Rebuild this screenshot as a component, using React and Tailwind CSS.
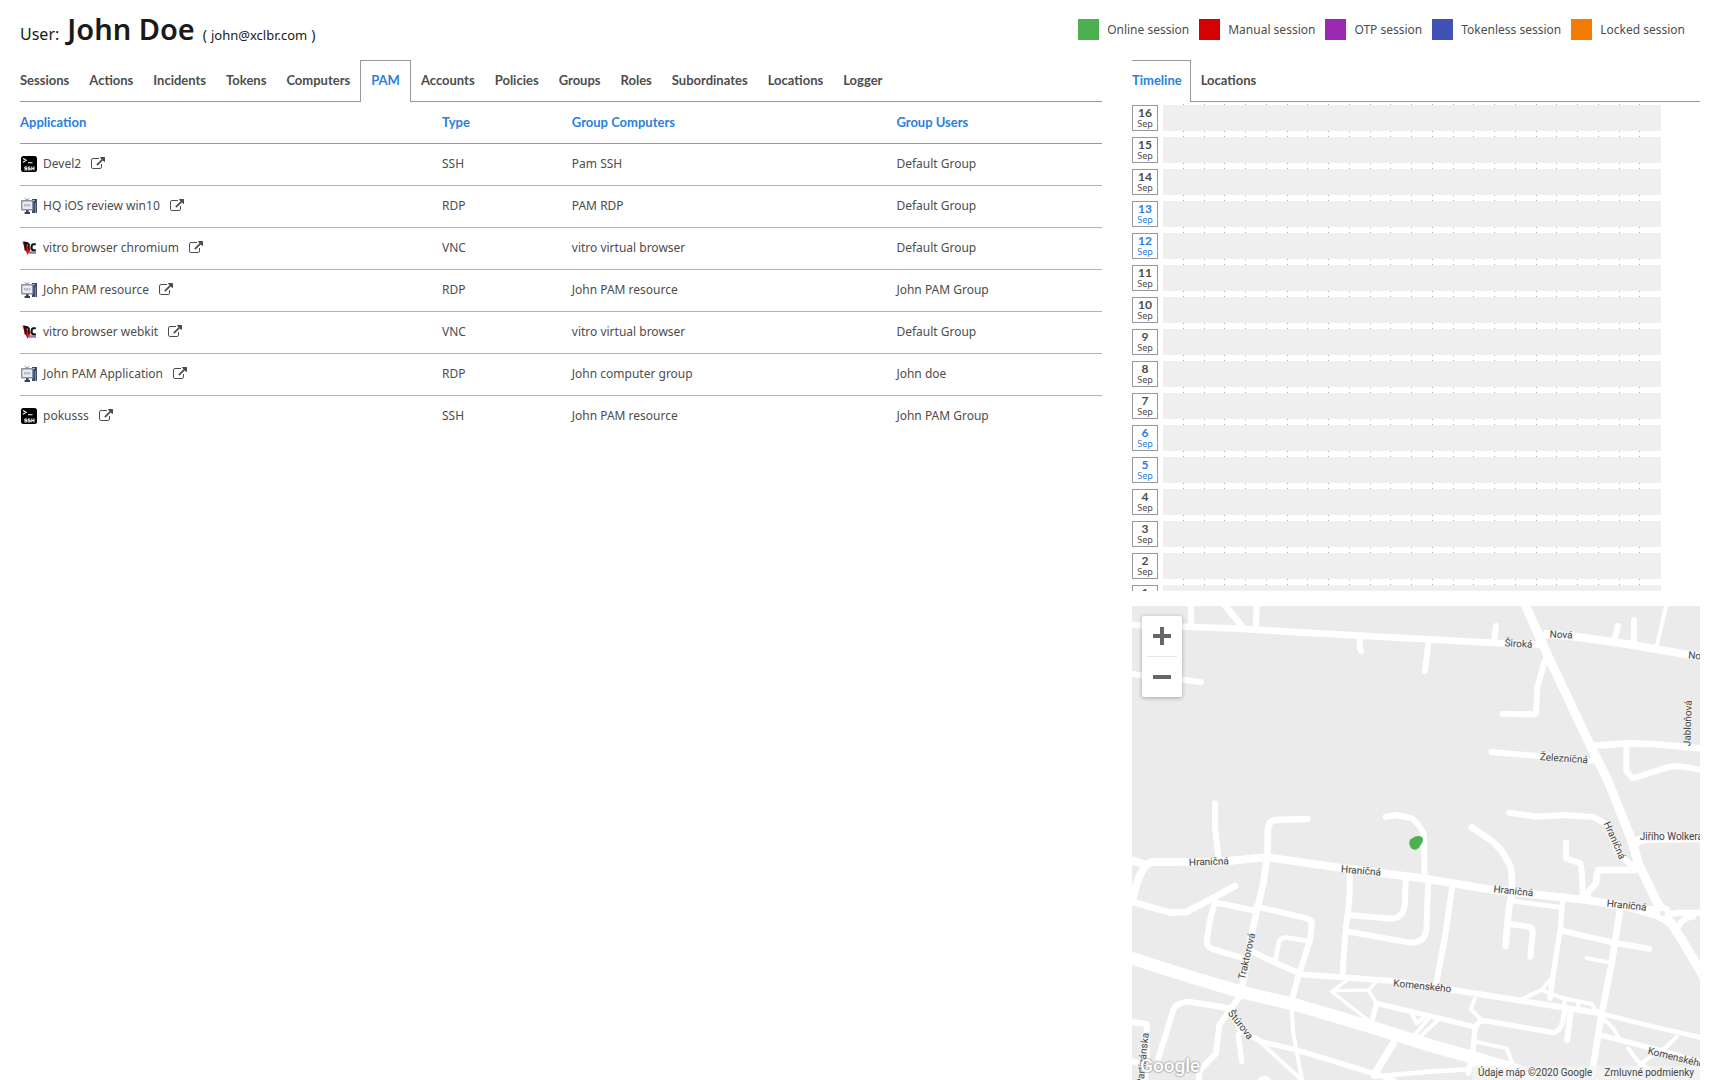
import React from "react";

const legend = [
  ["Online session", "bg-[#4caf50]"],
  ["Manual session", "bg-[#d50000]"],
  ["OTP session", "bg-[#9c27b0]"],
  ["Tokenless session", "bg-[#3f51b5]"],
  ["Locked session", "bg-[#f57c00]"],
];

const tabs = [
  "Sessions", "Actions", "Incidents", "Tokens", "Computers", "PAM", "Accounts",
  "Policies", "Groups", "Roles", "Subordinates", "Locations", "Logger",
];

const rows = [
  ["Devel2", "SSH", "Pam SSH", "Default Group"],
  ["HQ iOS review win10", "RDP", "PAM RDP", "Default Group"],
  ["vitro browser chromium", "VNC", "vitro virtual browser", "Default Group"],
  ["John PAM resource", "RDP", "John PAM resource", "John PAM Group"],
  ["vitro browser webkit", "VNC", "vitro virtual browser", "Default Group"],
  ["John PAM Application", "RDP", "John computer group", "John doe"],
  ["pokusss", "SSH", "John PAM resource", "John PAM Group"],
];

const days = [16, 15, 14, 13, 12, 11, 10, 9, 8, 7, 6, 5, 4, 3, 2, 1];
const weekend = [13, 12, 6, 5];
const hours = Array.from({ length: 24 }, (_, i) => i);

function SshIcon() {
  return (
    <svg className="size-4 shrink-0" viewBox="0 0 16 16" aria-hidden="true">
      <rect width="16" height="16" rx="2.5" fill="#000" />
      <path d="M2 2.5l3.2 1.8L2 6.2M7 6.8h4.5" fill="none" stroke="#fff" strokeWidth="1.1" />
      <path d="M6 11H3.800v1.400H6v1.500H3.300M9.300 11H7.200v1.400h2.100v1.500H6.800M10.800 10.500v3.900M13 10.500v3.900M10.800 12.400h2.200" fill="none" stroke="#fff" strokeWidth="1" />
    </svg>
  );
}

function RdpIcon() {
  return (
    <svg className="size-4 shrink-0" viewBox="0 0 16 16" aria-hidden="true">
      <path d="M11 1h5v14h-5z" fill="#3c4a68" />
      <path d="M14.500 5v10" stroke="#7c89a5" strokeWidth="1" />
      <path d="M12 2.500h2" stroke="#a5afc2" strokeWidth="1" />
      <path d="M3.500 0L6 2.200 8.500 0" fill="none" stroke="#7b869c" strokeWidth="1" />
      <rect x=".7" y="2.700" width="11" height="9" rx=".5" fill="#e9ebef" stroke="#8791a5" strokeWidth="1.400" />
      <path d="M3 7.200h6.500" stroke="#b3bac8" strokeWidth="2.600" strokeDasharray="1.800 .5" />
      <path d="M5 12.300h2.600V14H9v2H3.600v-2H5z" fill="#33415f" />
    </svg>
  );
}

function VncIcon() {
  return (
    <svg className="size-4 shrink-0" viewBox="0 0 16 16" aria-hidden="true">
      <path d="M8.500 11.300H15v2.400H7.800z" fill="#8482b4" />
      <path d="M1.300 1.500h3.200L8.500 9l1-3v4L6.600 14.800 4.200 10z" fill="#f00a0a" />
      <path d="M3 2h3.500l2.300 2V9.500H7V5L5.400 4v6.500H3.600z" fill="#111" />
      <path d="M14.800 4.200h-2.300q-1.900 0-1.900 3t1.900 3h2.300" fill="none" stroke="#111" strokeWidth="2" />
    </svg>
  );
}

const typeIcons = { SSH: SshIcon, RDP: RdpIcon, VNC: VncIcon };

function ExternalIcon() {
  return (
    <svg className="size-3.5" viewBox="0 0 1792 1792" fill="currentColor" aria-hidden="true">
      <path d="M1408 928v320q0 119-84.500 203.500t-203.500 84.500h-832q-119 0-203.500-84.500t-84.500-203.500v-832q0-119 84.500-203.500t203.500-84.500h704q14 0 23 9t9 23v64q0 14-9 23t-23 9h-704q-66 0-113 47t-47 113v832q0 66 47 113t113 47h832q66 0 113-47t47-113v-320q0-14 9-23t23-9h64q14 0 23 9t9 23zm384-864v512q0 26-19 45t-45 19-45-19l-176-176-652 652q-10 10-23 10t-23-10l-114-114q-10-10-10-23t10-23l652-652-176-176q-19-19-19-45t19-45 45-19h512q26 0 45 19t19 45z" />
    </svg>
  );
}

/* Streets as [stroke width, path]; the map's unit is a third of a pixel. */
const streets = [
  [20, "M6 75L190 81L330 86L520 98L900 118L1120 130L1225 134"],
  [18, "M182 10L184 78"],
  [20, "M280 10L335 78"],
  [18, "M381 10L377 85"],
  [18, "M690 118L689 143L693 153"],
  [18, "M896 120L885 213"],
  [18, "M6 222L213 246"],
  [24, "M1250 102L1350 112L1490 132L1720 172"],
  [18, "M1098 78L1093 118"],
  [18, "M1464 78L1453 118"],
  [18, "M1512 60V125"],
  [12, "M1610 10L1581 135"],
  [18, "M1245 180L1222 262L1218 338Q1218 343 1210 343L1118 342"],
  [18, "M1085 456L1385 482"],
  [20, "M1395 437L1490 430L1570 432L1720 446"],
  [18, "M1489 440V512L1508 535L1620 500Q1650 495 1720 512"],
  [18, "M1138 638L1220 650L1300 645L1390 651L1430 672L1465 760L1515 805"],
  [20, "M1025 682L1085 722L1115 752L1137 790Q1146 805 1146 850L1145 880L1136 930L1127 1038"],
  [18, "M255 610V680L265 770"],
  [20, "M532 657L435 660Q418 662 414 685L412 770L400 850L365 1000L335 1170"],
  [18, "M767 651L800 645L845 655Q880 685 882 710L884 835"],
  [24, "M6 782L50 795M6 905Q30 790 70 786L270 785L410 772L640 805L900 838L1090 870L1370 900L1490 920L1580 940"],
  [20, "M6 905L120 938L170 936L260 888L315 858"],
  [18, "M255 905L240 960L230 1025Q231 1043 250 1048L335 1073M362 1053L440 1090L515 1123L540 1125L780 1142L970 1170L1410 1240"],
  [18, "M258 908L380 933M380 920L530 955Q547 960 545 975L540 1020L505 1130L487 1195"],
  [12, "M485 1230L490 1300L517 1445"],
  [14, "M436 1080L447 1025Q453 1012 470 1013L535 1023"],
  [38, "M-10 1070L180 1130L330 1175L500 1215L720 1280L900 1336L1020 1370L1130 1402L1200 1425"],
  [18, "M660 820L658 900L645 1010L638 1125"],
  [18, "M655 945L790 956Q825 950 825 900L827 840"],
  [18, "M655 995L840 1028Q885 1028 889 990L895 840"],
  [10, "M650 1142L605 1175L720 1265M610 1172L715 1170L740 1145M715 1170L740 1210"],
  [16, "M725 1265L740 1210L900 1248L1030 1280"],
  [12, "M845 1240L860 1270L885 1250M850 1310L900 1250M870 1310L930 1255"],
  [22, "M790 1330L735 1420"],
  [18, "M-5 1265L50 1272V1370L45 1440M-5 1380L50 1395"],
  [18, "M85 1375L130 1230Q136 1213 160 1208L175 1205L300 1225"],
  [18, "M325 1195L268 1275L258 1360L210 1410L205 1450"],
  [16, "M300 1230L330 1290L395 1325L500 1350L730 1420L790 1440"],
  [16, "M325 1305L335 1385"],
  [12, "M395 1330L515 1440"],
  [14, "M730 1430L900 1415L1010 1408L1040 1390"],
  [18, "M1308 728V775L1352 790Q1358 830 1358 885"],
  [20, "M1520 810H1405Q1398 830 1398 850L1375 875L1370 895"],
  [18, "M1600 945L1650 938H1720M1640 990Q1655 950 1690 950"],
  [14, "M1140 902L1290 922"],
  [16, "M1298 900L1292 980L1270 1120L1260 1195"],
  [12, "M1265 1135L1235 1170L1180 1195M1235 1170L1300 1195L1385 1212L1397 1230M1303 1200V1225M1345 1205V1230"],
  [18, "M1295 992L1460 1030L1558 1046"],
  [20, "M1470 930L1445 1090L1415 1240L1386 1420"],
  [12, "M1370 1074L1435 1087"],
  [18, "M1138 972L1195 980Q1210 984 1208 1000L1201 1070"],
  [18, "M967 860L945 1010L918 1155"],
  [12, "M1035 1195L1022 1228L1055 1260"],
  [16, "M1015 1420L1028 1360L1035 1290Q1040 1262 1065 1262L1270 1298Q1290 1295 1298 1265L1306 1225"],
  [18, "M1322 1235L1311 1320"],
  [12, "M1035 1325L1130 1345L1145 1385"],
  [14, "M1410 1240L1570 1280L1720 1314"],
  [12, "M1412 1248L1450 1285L1470 1320M1640 1310L1610 1340L1560 1370L1500 1420M1495 1345L1520 1380L1560 1410"],
  [16, "M1410 1305L1510 1330L1720 1388"],
];

const labels = [
  [1165, 141, 3, "Široká"],
  [1293, 114, 3, "Nová"],
  [1708, 178, 6, "Nová"],
  [1683, 370, -88, "Jabloňová"],
  [1301, 485, 4, "Železničná"],
  [1624, 721, 0, "Jiřího Wolkera"],
  [237, 795, -2, "Hraničná"],
  [692, 822, 5, "Hraničná"],
  [1149, 883, 6, "Hraničná"],
  [1489, 926, 6, "Hraničná"],
  [1445, 725, 66, "Hraničná"],
  [360, 1071, -77, "Traktorová"],
  [876, 1168, 6, "Komenského"],
  [1636, 1382, 14, "Komenského"],
  [324, 1280, 52, "Štúrova"],
  [48, 1378, -84, "Partizánska"],
];

function StreetMap() {
  return (
    <svg className="h-full w-full" viewBox="6 18 1704 1422" preserveAspectRatio="xMinYMin slice" role="img" aria-label="Map">
      <g fill="none" stroke="#fff" strokeLinecap="round" strokeLinejoin="round">
        {streets.map(([w, d]) => (
          <path key={d} d={d} strokeWidth={w} />
        ))}
        <path d="M1184 10L1255 170L1385 445L1435 545L1505 720L1525 790L1580 905L1650 1010L1730 1145" strokeWidth="27" />
        <path d="M1510 740Q1520 718 1550 716L1720 714" strokeWidth="26" />
        <path d="M1490 925L1580 950L1630 980L1600 925Z" strokeWidth="14" fill="#fff" />
      </g>
      <circle cx="1598" cy="940" r="26" fill="#fff" />
      <circle cx="1598" cy="940" r="8" fill="#ebebeb" />
      <circle cx="403" cy="1452" r="24" fill="#fff" />
      <path d="M838 728Q838 718 848 714Q856 707 868 708Q879 710 879 720Q878 730 870 737Q866 748 854 749Q838 746 838 728Z" fill="#4caf50" />
      <g fontFamily="Roboto, sans-serif" fontSize="30" fill="#444" stroke="#f3f3f3" strokeWidth="4" paintOrder="stroke" textAnchor="middle">
        {labels.map(([x, y, r, t]) => (
          <text key={`${t}-${x}`} transform={`translate(${x} ${y}) rotate(${r})`}>{t}</text>
        ))}
      </g>
    </svg>
  );
}

export default function App() {
  return (
    <div className="flex h-screen min-h-[760px] flex-col overflow-hidden bg-white font-['Noto_Sans','Open_Sans',sans-serif] text-xs text-[#4d4d4d]">
      <header className="flex h-[60px] shrink-0 items-start justify-between pl-5 pr-[35px]">
        <h1 className="flex items-baseline pt-[9px] text-base leading-10 text-[#1a1a1a]">
          User:
          <span className="ml-2 text-[29px] font-semibold">John Doe</span>
          <span className="ml-2 text-sm">(</span>
          <span className="mx-1 text-[13px]">john@xclbr.com</span>
          <span className="text-sm">)</span>
        </h1>
        <ul className="flex gap-2.5 pt-[19px]">
          {legend.map(([name, color]) => (
            <li key={name} className="flex items-center gap-2">
              <span className={`size-[21px] ${color}`} />
              <span className="leading-5">{name}</span>
            </li>
          ))}
        </ul>
      </header>

      <div className="flex min-h-0 flex-1 gap-[30px] pl-5 pr-5">
        <main className="min-w-0 flex-[1082]">
          <nav className="flex h-[42px] font-[Lato,sans-serif] text-[13px] font-bold">
            {tabs.map((t, i) =>
              t === "PAM" ? (
                <button key={t} className="border border-b-0 border-[#999] px-2.5 pb-0.5 text-[#2a7fe0]">{t}</button>
              ) : (
                <button key={t} className={`border-b border-[#999] ${i === 0 ? "pr-2.5" : "px-2.5"}`}>{t}</button>
              )
            )}
            <span className="flex-1 border-b border-[#999]" />
          </nav>
          <table className="w-full table-fixed text-left">
            <thead>
              <tr className="h-[41px] border-b border-[#999] font-[Lato,sans-serif] text-[13px] text-[#2a7fe0]">
                <th className="w-[39%] font-bold">Application</th>
                <th className="w-[12%] font-bold">Type</th>
                <th className="w-[30%] font-bold">Group Computers</th>
                <th className="font-bold">Group Users</th>
              </tr>
            </thead>
            <tbody>
              {rows.map(([name, type, computers, users]) => {
                const Icon = typeIcons[type];
                return (
                  <tr key={name} className="h-[42px] border-b border-[#b3b3b3] last:border-b-0">
                    <td>
                      <span className="flex items-center gap-1.5 pl-px">
                        <Icon />
                        <span>{name}</span>
                        <a href="#open" aria-label={`Open ${name}`} className="ml-1">
                          <ExternalIcon />
                        </a>
                      </span>
                    </td>
                    <td>{type}</td>
                    <td>{computers}</td>
                    <td>{users}</td>
                  </tr>
                );
              })}
            </tbody>
          </table>
        </main>

        <aside className="flex min-w-0 flex-[568] flex-col">
          <nav className="flex h-[42px] shrink-0 font-[Lato,sans-serif] text-[13px] font-bold">
            <button className="border-r border-t border-[#999] pb-0.5 pr-2 text-[#2a7fe0]">Timeline</button>
            <button className="border-b border-[#999] px-2.5">Locations</button>
            <span className="flex-1 border-b border-[#999]" />
          </nav>
          <div className="h-[489px] shrink-0 overflow-hidden pr-[39px]">
            <ol className="-mt-[3px]">
              {days.map((d) => (
                <li key={d} className={`grid grid-cols-[26px_1fr] gap-x-[5px] ${weekend.includes(d) ? "text-[#2a7fe0]" : ""}`}>
                  <div className="col-start-2 flex h-1.5">
                    {hours.map((h) => (
                      <span key={h} className="flex flex-1 justify-end">
                        {h < 23 && <span className="w-px border-y border-[#aaa]" />}
                      </span>
                    ))}
                  </div>
                  <div className="col-start-1 flex h-[26px] flex-col items-center justify-center border border-[#999]">
                    <b className="font-[Lato,sans-serif] text-xs leading-3">{d}</b>
                    <span className="text-[9px] leading-[10px]">Sep</span>
                  </div>
                  <div className="bg-[#efefef]" />
                </li>
              ))}
            </ol>
          </div>
          <section className="relative mt-[15px] min-h-0 flex-1 overflow-hidden bg-[#ebebeb]">
            <StreetMap />
            <div className="absolute left-2.5 top-2.5 flex w-10 flex-col items-center rounded-xs bg-white shadow-[0_1px_4px_rgba(0,0,0,0.3)]">
              <button aria-label="Zoom in" className="flex h-10 w-full items-center justify-center">
                <svg className="size-[18px]" viewBox="0 0 18 18" fill="#666"><path d="M7 0h4v7h7v4h-7v7H7v-7H0V7h7z" /></svg>
              </button>
              <span className="h-px w-[30px] bg-[#e6e6e6]" />
              <button aria-label="Zoom out" className="flex h-10 w-full items-center justify-center">
                <svg className="size-[18px]" viewBox="0 0 18 18" fill="#666"><path d="M0 7h18v4H0z" /></svg>
              </button>
            </div>
            <span className="absolute bottom-0 left-2 font-[Roboto,sans-serif] text-[19px] font-medium leading-7 text-white [text-shadow:0_0_2px_#888,0_0_2px_#999]">Google</span>
            <div className="absolute bottom-0 right-0 flex h-[14px] items-center gap-3 bg-[#f5f5f5]/70 px-1.5 font-[Roboto,sans-serif] text-[10px] text-[#444]">
              <span>Údaje máp ©2020 Google</span>
              <a href="#terms">Zmluvné podmienky</a>
            </div>
          </section>
        </aside>
      </div>
    </div>
  );
}
